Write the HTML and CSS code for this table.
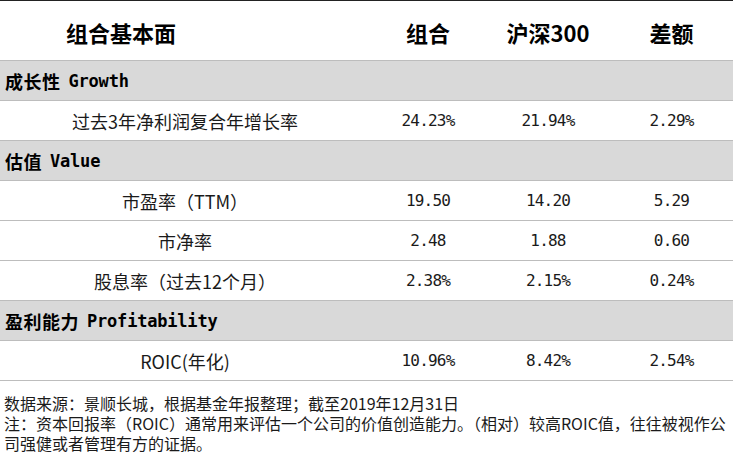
FILE: index.html
```html
<!DOCTYPE html>
<html lang="zh">
<head>
<meta charset="utf-8">
<link rel="stylesheet" href="styles.css">
</head>
<body>
<div class="table">
  <div class="row head">
    <div class="cell label-head">组合基本面</div>
    <div class="cell">组合</div>
    <div class="cell">沪深300</div>
    <div class="cell">差额</div>
  </div>
  <div class="row section"><span class="sec-cn">成长性</span><span class="sec-en">Growth</span></div>
  <div class="row data">
    <div class="cell label">过去3年净利润复合年增长率</div>
    <div class="cell num">24.23%</div>
    <div class="cell num">21.94%</div>
    <div class="cell num">2.29%</div>
  </div>
  <div class="row section"><span class="sec-cn">估值</span><span class="sec-en">Value</span></div>
  <div class="row data">
    <div class="cell label">市盈率（TTM）</div>
    <div class="cell num">19.50</div>
    <div class="cell num">14.20</div>
    <div class="cell num">5.29</div>
  </div>
  <div class="row data">
    <div class="cell label">市净率</div>
    <div class="cell num">2.48</div>
    <div class="cell num">1.88</div>
    <div class="cell num">0.60</div>
  </div>
  <div class="row data">
    <div class="cell label">股息率（过去12个月）</div>
    <div class="cell num">2.38%</div>
    <div class="cell num">2.15%</div>
    <div class="cell num">0.24%</div>
  </div>
  <div class="row section"><span class="sec-cn">盈利能力</span><span class="sec-en">Profitability</span></div>
  <div class="row data">
    <div class="cell label">ROIC(年化)</div>
    <div class="cell num">10.96%</div>
    <div class="cell num">8.42%</div>
    <div class="cell num">2.54%</div>
  </div>
</div>
<div class="notes">
  <p>数据来源：景顺长城，根据基金年报整理；截至2019年12月31日</p>
  <p>注：资本回报率（ROIC）通常用来评估一个公司的价值创造能力。（相对）较高ROIC值，往往被视作公司强健或者管理有方的证据。</p>
</div>
</body>
</html>
```
FILE: styles.css
```css
html, body {
  margin: 0;
  padding: 0;
  background: #ffffff;
}
body {
  font-family: "Noto Sans CJK SC", "Liberation Sans", sans-serif;
  color: #111;
  width: 733px;
  overflow: hidden;
}
.table {
  display: flex;
  flex-direction: column;
  border-top: 1px solid #222;
}
.row {
  box-sizing: border-box;
  height: 40px;
  border-bottom: 1px solid #bdbdbd;
  display: grid;
  grid-template-columns: 370px 116px 124px 123px;
  align-items: center;
}
.row.head {
  height: 60px;
  font-size: 22px;
  font-weight: 700;
  color: #000;
}
.cell {
  text-align: center;
  white-space: nowrap;
}
.head .cell {
  line-height: 30px;
  padding-top: 2px;
}
.label-head {
  text-align: left;
  padding-left: 66px;
}
.row.section {
  display: flex;
  align-items: center;
  background: #d9d9d9;
  padding-left: 5px;
  font-weight: 700;
  color: #000;
}
.sec-cn {
  font-size: 18px;
  letter-spacing: 0.5px;
}
.sec-en {
  font-family: "DejaVu Sans Mono", "Liberation Mono", monospace;
  font-size: 17px;
  letter-spacing: -0.2px;
  margin-left: 8px;
}
.row.data {
  font-size: 18px;
  color: #1a1a1a;
}
.label {
  padding-left: 0;
}
.num {
  font-family: "DejaVu Sans Mono", "Liberation Mono", monospace;
  font-size: 16px;
  letter-spacing: -0.8px;
}
.notes {
  margin-top: 12px;
  padding-left: 4px;
  font-size: 16px;
  line-height: 20px;
  color: #1a1a1a;
}
.notes p {
  margin: 0;
}
```
